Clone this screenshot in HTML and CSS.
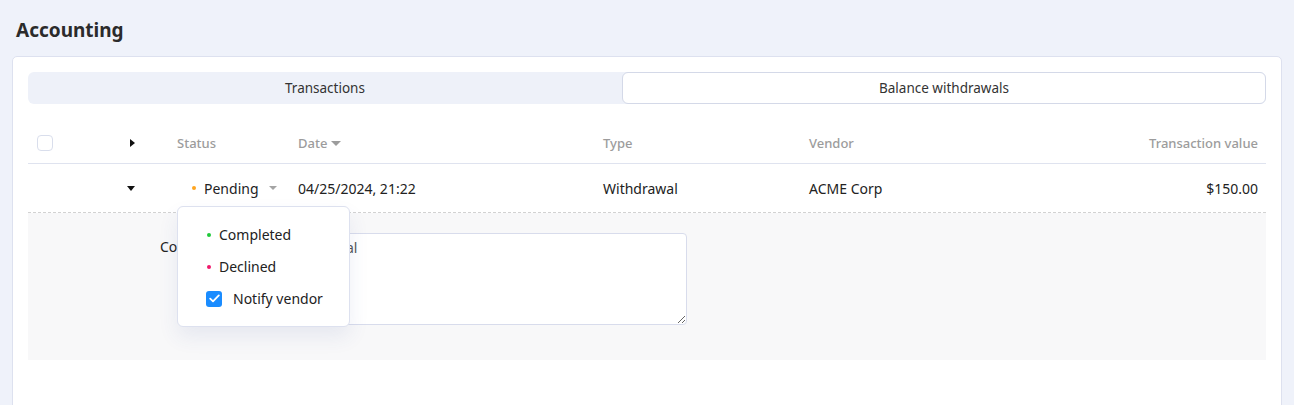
FILE: index.html
```html
<!DOCTYPE html>
<html>
<head>
<meta charset="utf-8">
<link rel="stylesheet" href="styles.css">
</head>
<body>
<h1 class="title">Accounting</h1>
<div class="card">
  <div class="tabs">
    <div class="tab">Transactions</div>
    <div class="tab tab-active">Balance withdrawals</div>
  </div>
  <div class="table">
    <div class="row head">
      <div class="cell c-check"><span class="checkbox"></span></div>
      <div class="cell c-caret"><span class="tri-right"></span></div>
      <div class="cell">Status</div>
      <div class="cell">Date <span class="tri-down gray"></span></div>
      <div class="cell">Type</div>
      <div class="cell">Vendor</div>
      <div class="cell c-right">Transaction value</div>
    </div>
    <div class="row body">
      <div class="cell c-check"></div>
      <div class="cell c-caret"><span class="tri-down"></span></div>
      <div class="cell c-status">
        <div class="status-btn"><span class="dot orange"></span>Pending<span class="tri-down gray small"></span></div>
        <div class="popover">
          <div class="pop-item"><span class="dot green"></span>Completed</div>
          <div class="pop-item"><span class="dot pink"></span>Declined</div>
          <label class="pop-item pop-check"><span class="checked"><svg width="11" height="9" viewBox="0 0 11 9"><path d="M1.2 4.6 L4 7.3 L9.8 1.4" fill="none" stroke="#fff" stroke-width="1.8" stroke-linecap="round" stroke-linejoin="round"/></svg></span>Notify vendor</label>
        </div>
      </div>
      <div class="cell">04/25/2024, 21:22</div>
      <div class="cell">Withdrawal</div>
      <div class="cell">ACME Corp</div>
      <div class="cell c-right">$150.00</div>
    </div>
    <div class="expand">
      <label class="exp-label">Comment</label>
      <textarea class="exp-text">Cash withdrawal</textarea>
    </div>
  </div>
</div>
</body>
</html>
```
FILE: styles.css
```css
* { box-sizing: border-box; }
html, body { margin: 0; padding: 0; }
body {
  background: #eff2fa;
  font-family: "Noto Sans", "Open Sans", sans-serif;
  font-size: 14px;
  color: #222;
  padding: 0 12px;
  overflow: hidden;
  height: 405px;
}
.title {
  margin: 0;
  padding: 16px 4px 0;
  height: 56px;
  font-size: 19px;
  font-weight: 700;
  color: #2b2b2b;
  line-height: 28px;
}
.card {
  background: #fff;
  border: 1px solid #dde1ef;
  border-radius: 5px;
  width: 1270px;
  height: 400px;
  padding: 15px 15px 0;
}
.tabs {
  display: flex;
  height: 32px;
  background: #eef1f9;
  border-radius: 6px;
}
.tab {
  flex: 1 1 auto;
  display: flex;
  align-items: center;
  justify-content: center;
  color: #333;
  border: 1px solid transparent;
  border-radius: 6px;
  font-size: 13.5px;
}
.tab-active {
  background: #fff;
  border-color: #d4d9e8;
}
.table { margin-top: 20px; }
.row {
  display: grid;
  grid-template-columns: 91px 50px 121px 305px 206px 1fr 200px;
  align-items: center;
}
.head {
  height: 40px;
  border-bottom: 1px solid #dfe3ef;
  color: #9c9c9c;
  font-size: 13px;
  font-weight: 500;
  padding-bottom: 1px;
}
.body {
  height: 49px;
  border-bottom: 1px dashed #d2d2d2;
}
.cell { padding: 0 8px; white-space: nowrap; display: flex; align-items: center; }
.c-check { padding-left: 9px; }
.c-caret { padding-left: 8px; }
.c-right { justify-content: flex-end; }
.checkbox {
  width: 16px; height: 16px;
  border: 1px solid #d9deec;
  border-radius: 4px;
  display: block;
}
.tri-right {
  width: 0; height: 0;
  border-top: 4px solid transparent;
  border-bottom: 4px solid transparent;
  border-left: 5px solid #111;
  margin-left: 3px;
}
.tri-down {
  width: 0; height: 0;
  border-left: 4px solid transparent;
  border-right: 4px solid transparent;
  border-top: 5px solid #111;
}
.tri-down.gray { border-top-color: #9c9c9c; border-left-width: 5px; border-right-width: 5px; margin-left: 4px; }
.tri-down.small { border-left-width: 4px; border-right-width: 4px; border-top-width: 4px; margin-left: 10px; border-top-color: #a4a4a4; }
.c-status { position: relative; }
.status-btn { display: flex; align-items: center; padding-left: 15px; color: #222; }
.dot { width: 4px; height: 4px; border-radius: 50%; display: inline-block; margin-right: 8px; }
.orange { background: #ffa51f; }
.green { background: #1fc93a; }
.pink { background: #f0196b; }
.popover {
  position: absolute;
  left: 8px;
  top: 27px;
  width: 173px;
  height: 121px;
  background: #fff;
  border: 1px solid #dde1ef;
  border-radius: 6px;
  box-shadow: 0 10px 20px rgba(60, 80, 150, 0.09);
  padding: 12px 0 0 29px;
  z-index: 5;
}
.pop-item {
  display: flex;
  align-items: center;
  height: 32px;
  color: #222;
}
.pop-check { margin-left: -1px; }
.checked {
  width: 16px; height: 16px;
  background: #1a8cff;
  border-radius: 3px;
  display: flex;
  align-items: center;
  justify-content: center;
  margin-right: 11px;
}
.expand {
  background: #f8f8f9;
  height: 147px;
  display: flex;
  align-items: flex-start;
  padding: 20px 0 0 132px;
}
.exp-label { width: 80px; color: #222; padding-top: 4px; }
.exp-text {
  width: 447px;
  height: 92px;
  border: 1px solid #d8dcec;
  border-radius: 4px;
  font-family: inherit;
  font-size: 14px;
  color: #555;
  padding: 4px 8px;
  background: #fff;
}
```
